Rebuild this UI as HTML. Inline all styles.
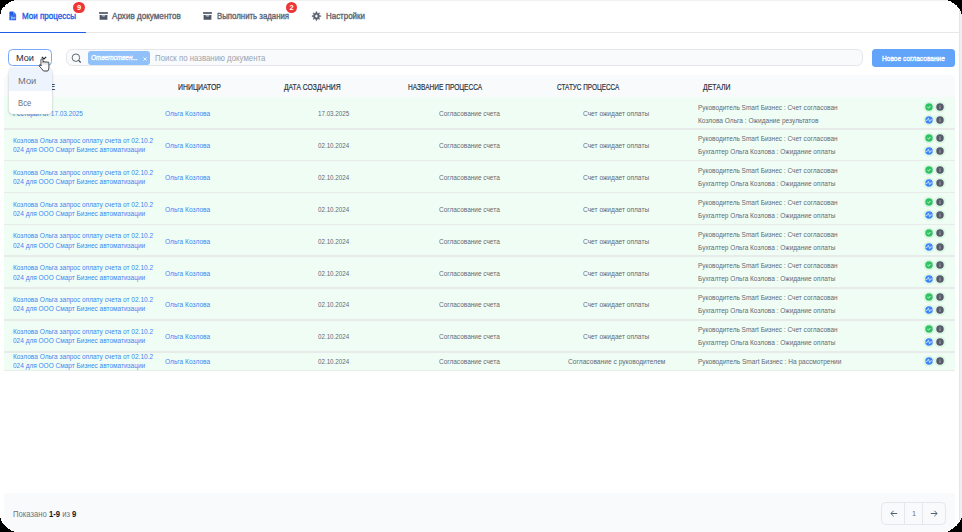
<!DOCTYPE html>
<html><head><meta charset="utf-8">
<style>
html,body{margin:0;padding:0;}
body{width:962px;height:532px;position:relative;overflow:hidden;background:#fff;font-family:"Liberation Sans",sans-serif;}
.t{position:absolute;white-space:nowrap;line-height:1;transform-origin:0 0;}
.badge{position:absolute;width:11.2px;height:11.2px;border-radius:50%;background:#ee3636;color:#fff;font-family:"Liberation Sans",sans-serif;font-weight:700;font-size:7.5px;line-height:11.2px;text-align:center;}
</style></head><body>
<div style="position:absolute;left:0;top:0;width:962px;height:1.3px;background:#eff1f3"></div>
<div style="position:absolute;left:0;top:32px;width:959px;height:1px;background:#e5e7eb"></div>
<div style="position:absolute;left:-2px;top:31.6px;width:88px;height:1.6px;border-radius:1px;background:#1c5ce6"></div>
<svg style="position:absolute;left:0;top:0" width="30" height="30" viewBox="0 0 30 30">
<path d="M10 11.6H13.4L16.1 14.3V19.7A0.6 0.6 0 0 1 15.5 20.3H10A0.6 0.6 0 0 1 9.4 19.7V12.2A0.6 0.6 0 0 1 10 11.6Z" fill="#1d5ae6"/>
<path d="M13.5 11.8V14.2H15.9" fill="none" stroke="#9fb9f5" stroke-width="0.55"/>
<path d="M9.4 16.05H16.1" stroke="#7fa3f3" stroke-width="0.6"/>
<path d="M11.4 16.4V19.9M11.6 17.55H15.6M11.6 18.75H15.6" stroke="#dfe8fd" stroke-width="0.6"/>
</svg>
<div class="t" style="left:21.90px;top:12.29px;font-size:8.4px;font-weight:400;font-style:normal;color:#1d5ae6;transform:scaleX(0.9592);-webkit-text-stroke:0.32px currentColor;">Мои процессы</div>
<div class="badge" style="left:73.4px;top:1.7px">9</div>
<svg style="position:absolute;left:97.8px;top:11px" width="11" height="10" viewBox="0 0 11 10">
<rect x="1" y="1" width="9" height="1.9" rx="0.3" fill="#687080"/>
<rect x="2.8" y="3.9" width="5.4" height="1.6" fill="#a9aeb8"/>
<path d="M1.6 3.9H3.4Q3.5 5.6 5.5 5.6Q7.5 5.6 7.6 3.9H9.4V8.2Q9.4 8.8 8.8 8.8H2.2Q1.6 8.8 1.6 8.2Z" fill="#4f5767"/></svg>
<div class="t" style="left:112.00px;top:12.29px;font-size:8.4px;font-weight:400;font-style:normal;color:#5a6270;transform:scaleX(0.9679);-webkit-text-stroke:0.32px currentColor;">Архив документов</div>
<svg style="position:absolute;left:202.2px;top:11px" width="11" height="10" viewBox="0 0 11 10">
<rect x="1" y="1" width="9" height="1.9" rx="0.3" fill="#687080"/>
<rect x="2.8" y="3.9" width="5.4" height="1.6" fill="#a9aeb8"/>
<path d="M1.6 3.9H3.4Q3.5 5.6 5.5 5.6Q7.5 5.6 7.6 3.9H9.4V8.2Q9.4 8.8 8.8 8.8H2.2Q1.6 8.8 1.6 8.2Z" fill="#4f5767"/></svg>
<div class="t" style="left:216.80px;top:12.29px;font-size:8.4px;font-weight:400;font-style:normal;color:#5a6270;transform:scaleX(0.9336);-webkit-text-stroke:0.32px currentColor;">Выполнить задания</div>
<div class="badge" style="left:285.9px;top:1.6px">2</div>
<svg style="position:absolute;left:0;top:0" width="962" height="40"><path d="M315.87 13.05 L315.99 11.72 L316.81 11.72 L316.93 13.05 L318.18 13.56 L319.20 12.71 L319.79 13.30 L318.94 14.32 L319.45 15.57 L320.78 15.69 L320.78 16.51 L319.45 16.63 L318.94 17.88 L319.79 18.90 L319.20 19.49 L318.18 18.64 L316.93 19.15 L316.81 20.48 L315.99 20.48 L315.87 19.15 L314.62 18.64 L313.60 19.49 L313.01 18.90 L313.86 17.88 L313.35 16.63 L312.02 16.51 L312.02 15.69 L313.35 15.57 L313.86 14.32 L313.01 13.30 L313.60 12.71 L314.62 13.56Z M314.85 16.10 a1.55 1.55 0 1 0 3.10 0 a1.55 1.55 0 1 0 -3.10 0z" fill="#5a6270" fill-rule="evenodd" stroke="#5a6270" stroke-width="0.5" stroke-linejoin="round"/></svg>
<div class="t" style="left:325.80px;top:12.29px;font-size:8.4px;font-weight:400;font-style:normal;color:#5a6270;transform:scaleX(0.9469);-webkit-text-stroke:0.32px currentColor;">Настройки</div>
<div style="position:absolute;left:8.1px;top:49.1px;width:44.4px;height:17.1px;box-sizing:border-box;border:1.3px solid #76a9fa;border-radius:4.5px;background:#fff"></div>
<div class="t" style="left:15.90px;top:53.97px;font-size:8.3px;font-weight:400;font-style:normal;color:#1f2937;transform:scaleX(1.1070);">Мои</div>
<svg style="position:absolute;left:40.5px;top:55.5px" width="6" height="4" viewBox="0 0 6 4"><path d="M0.8 0.8L3 3L5.2 0.8" stroke="#1f2937" stroke-width="1.2" fill="none"/></svg>
<div style="position:absolute;left:65.7px;top:49.4px;width:797.8px;height:16.6px;box-sizing:border-box;border:1px solid #e5e7eb;border-radius:6px;background:#f9fafb"></div>
<svg style="position:absolute;left:71px;top:53px" width="11" height="10" viewBox="0 0 11 10"><circle cx="4.9" cy="4.7" r="3.75" stroke="#3b4350" stroke-width="0.8" fill="none"/><path d="M7.6 7.4L9.7 9.5" stroke="#3b4350" stroke-width="1.1"/></svg>
<div style="position:absolute;left:87.9px;top:51.1px;width:62.4px;height:13.5px;border-radius:3px;background:#90c1fb"></div>
<div class="t" style="left:91.30px;top:54.69px;font-size:7.1px;font-weight:400;font-style:italic;color:#ffffff;transform:scaleX(0.9111);-webkit-text-stroke:0.3px currentColor;">Ответствен...</div>
<svg style="position:absolute;left:142.8px;top:56.6px" width="4" height="4" viewBox="0 0 4 4"><path d="M0.4 0.4L3.6 3.6M3.6 0.4L0.4 3.6" stroke="#fff" stroke-width="0.8"/></svg>
<div class="t" style="left:155.30px;top:53.99px;font-size:8.4px;font-weight:400;font-style:normal;color:#9ca3af;transform:scaleX(0.9366);">Поиск по названию документа</div>
<div style="position:absolute;left:872.3px;top:49.1px;width:82.5px;height:17.8px;border-radius:3.5px;background:#62a4fa"></div>
<div class="t" style="left:882.00px;top:54.72px;font-size:7.3px;font-weight:400;font-style:normal;color:#ffffff;transform:scaleX(0.9038);-webkit-text-stroke:0.32px currentColor;">Новое согласование</div>
<div style="position:absolute;left:4px;top:75px;width:951px;height:22px;background:#f9fafb;border-radius:4px 4px 0 0"></div>
<div class="t" style="left:14.00px;top:82.87px;font-size:8.3px;font-weight:400;font-style:normal;color:#2b3442;transform:scaleX(0.9163);-webkit-text-stroke:0.2px currentColor;">НАЗВАНИЕ</div>
<div class="t" style="left:178.00px;top:82.87px;font-size:8.3px;font-weight:400;font-style:normal;color:#2b3442;transform:scaleX(0.8332);-webkit-text-stroke:0.2px currentColor;">ИНИЦИАТОР</div>
<div class="t" style="left:283.80px;top:82.87px;font-size:8.3px;font-weight:400;font-style:normal;color:#2b3442;transform:scaleX(0.8139);-webkit-text-stroke:0.2px currentColor;">ДАТА СОЗДАНИЯ</div>
<div class="t" style="left:408.40px;top:82.87px;font-size:8.3px;font-weight:400;font-style:normal;color:#2b3442;transform:scaleX(0.7907);-webkit-text-stroke:0.2px currentColor;">НАЗВАНИЕ ПРОЦЕССА</div>
<div class="t" style="left:556.80px;top:82.87px;font-size:8.3px;font-weight:400;font-style:normal;color:#2b3442;transform:scaleX(0.7719);-webkit-text-stroke:0.2px currentColor;">СТАТУС ПРОЦЕССА</div>
<div class="t" style="left:702.70px;top:82.87px;font-size:8.3px;font-weight:400;font-style:normal;color:#2b3442;transform:scaleX(0.8312);-webkit-text-stroke:0.2px currentColor;">ДЕТАЛИ</div>
<div style="position:absolute;left:4px;top:97.00px;width:951px;height:31.00px;background:#f0fdf4"></div>
<div style="position:absolute;left:4px;top:128.00px;width:951px;height:31.86px;background:#f0fdf4"></div>
<div style="position:absolute;left:4px;top:159.86px;width:951px;height:31.86px;background:#f0fdf4"></div>
<div style="position:absolute;left:4px;top:191.71px;width:951px;height:31.86px;background:#f0fdf4"></div>
<div style="position:absolute;left:4px;top:223.57px;width:951px;height:31.86px;background:#f0fdf4"></div>
<div style="position:absolute;left:4px;top:255.43px;width:951px;height:31.86px;background:#f0fdf4"></div>
<div style="position:absolute;left:4px;top:287.28px;width:951px;height:31.86px;background:#f0fdf4"></div>
<div style="position:absolute;left:4px;top:319.14px;width:951px;height:31.86px;background:#f0fdf4"></div>
<div style="position:absolute;left:4px;top:351.00px;width:951px;height:19.50px;background:#f0fdf4"></div>
<div style="position:absolute;left:4px;top:128.00px;width:951px;height:1.6px;background:#e7ecea"></div>
<div style="position:absolute;left:4px;top:159.86px;width:951px;height:1.6px;background:#e7ecea"></div>
<div style="position:absolute;left:4px;top:191.71px;width:951px;height:1.6px;background:#e7ecea"></div>
<div style="position:absolute;left:4px;top:223.57px;width:951px;height:1.6px;background:#e7ecea"></div>
<div style="position:absolute;left:4px;top:255.43px;width:951px;height:1.6px;background:#e7ecea"></div>
<div style="position:absolute;left:4px;top:287.28px;width:951px;height:1.6px;background:#e7ecea"></div>
<div style="position:absolute;left:4px;top:319.14px;width:951px;height:1.6px;background:#e7ecea"></div>
<div style="position:absolute;left:4px;top:351.00px;width:951px;height:1.6px;background:#e7ecea"></div>
<div style="position:absolute;left:4px;top:370px;width:951px;height:1px;background:#e7ede9"></div>
<div class="t" style="left:13.00px;top:109.61px;font-size:7.9px;font-weight:400;font-style:normal;color:#3d87f5;transform:scaleX(0.8129);">Ресторан от 17.03.2025</div>
<div class="t" style="left:164.90px;top:109.61px;font-size:7.9px;font-weight:400;font-style:normal;color:#3d87f5;transform:scaleX(0.8353);">Ольга Козлова</div>
<div class="t" style="left:317.50px;top:109.61px;font-size:7.9px;font-weight:400;font-style:normal;color:#626a77;transform:scaleX(0.7891);">17.03.2025</div>
<div class="t" style="left:439.00px;top:109.61px;font-size:7.9px;font-weight:400;font-style:normal;color:#626a77;transform:scaleX(0.8201);">Согласование счета</div>
<div class="t" style="left:583.30px;top:109.61px;font-size:7.9px;font-weight:400;font-style:normal;color:#626a77;transform:scaleX(0.8335);">Счет ожидает оплаты</div>
<div class="t" style="left:698.40px;top:103.51px;font-size:7.9px;font-weight:400;font-style:normal;color:#626a77;transform:scaleX(0.8224);">Руководитель Smart Бизнес : Счет согласован</div>
<div class="t" style="left:698.40px;top:116.91px;font-size:7.9px;font-weight:400;font-style:normal;color:#626a77;transform:scaleX(0.8328);">Козлова Ольга : Ожидание результатов</div>
<svg style="position:absolute;left:923.2px;top:100.5px" width="12" height="12" viewBox="0 0 12 12"><circle cx="6" cy="6" r="4.9" fill="none" stroke="#d6f6e0" stroke-width="1.2"/><circle cx="6" cy="6" r="3.75" fill="#2ec262"/><path d="M4.4 6.1L5.5 7.1L7.5 5" stroke="#fff" stroke-width="0.8" fill="none"/></svg>
<svg style="position:absolute;left:934.4px;top:100.5px" width="12" height="12" viewBox="0 0 12 12"><circle cx="6" cy="6" r="4.9" fill="none" stroke="#d6f6e0" stroke-width="1.2"/><circle cx="6" cy="6" r="3.75" fill="#555a69"/><path d="M6.1 4.1V4.8M6.1 5.4L5.9 7.9" stroke="#c3c7cf" stroke-width="0.75"/></svg>
<svg style="position:absolute;left:923.2px;top:113.5px" width="12" height="12" viewBox="0 0 12 12"><circle cx="6" cy="6" r="4.9" fill="none" stroke="#d6f6e0" stroke-width="1.2"/><circle cx="6" cy="6" r="3.75" fill="#3d85f6"/><path d="M2.6 6.4L4.2 6.4L5.4 4.2L6.7 7.7L7.6 5.9L9.4 5.9" stroke="#e6efff" stroke-width="0.75" fill="none" stroke-linejoin="round"/></svg>
<svg style="position:absolute;left:934.4px;top:113.5px" width="12" height="12" viewBox="0 0 12 12"><circle cx="6" cy="6" r="4.9" fill="none" stroke="#d6f6e0" stroke-width="1.2"/><circle cx="6" cy="6" r="3.75" fill="#555a69"/><path d="M6.1 4.1V4.8M6.1 5.4L5.9 7.9" stroke="#c3c7cf" stroke-width="0.75"/></svg>
<div class="t" style="left:12.70px;top:136.81px;font-size:7.9px;font-weight:400;font-style:normal;color:#3d87f5;transform:scaleX(0.8277);">Козлова Ольга запрос оплату счета от 02.10.2</div>
<div class="t" style="left:12.70px;top:146.11px;font-size:7.9px;font-weight:400;font-style:normal;color:#3d87f5;transform:scaleX(0.8229);">024 для ООО Смарт Бизнес автоматизации</div>
<div class="t" style="left:164.90px;top:142.11px;font-size:7.9px;font-weight:400;font-style:normal;color:#3d87f5;transform:scaleX(0.8353);">Ольга Козлова</div>
<div class="t" style="left:317.50px;top:142.11px;font-size:7.9px;font-weight:400;font-style:normal;color:#626a77;transform:scaleX(0.7891);">02.10.2024</div>
<div class="t" style="left:439.00px;top:142.11px;font-size:7.9px;font-weight:400;font-style:normal;color:#626a77;transform:scaleX(0.8201);">Согласование счета</div>
<div class="t" style="left:583.30px;top:142.11px;font-size:7.9px;font-weight:400;font-style:normal;color:#626a77;transform:scaleX(0.8335);">Счет ожидает оплаты</div>
<div class="t" style="left:698.40px;top:135.01px;font-size:7.9px;font-weight:400;font-style:normal;color:#626a77;transform:scaleX(0.8224);">Руководитель Smart Бизнес : Счет согласован</div>
<div class="t" style="left:698.40px;top:148.01px;font-size:7.9px;font-weight:400;font-style:normal;color:#626a77;transform:scaleX(0.8247);">Бухгалтер Ольга Козлова : Ожидание оплаты</div>
<svg style="position:absolute;left:923.2px;top:131.9px" width="12" height="12" viewBox="0 0 12 12"><circle cx="6" cy="6" r="4.9" fill="none" stroke="#d6f6e0" stroke-width="1.2"/><circle cx="6" cy="6" r="3.75" fill="#2ec262"/><path d="M4.4 6.1L5.5 7.1L7.5 5" stroke="#fff" stroke-width="0.8" fill="none"/></svg>
<svg style="position:absolute;left:934.4px;top:131.9px" width="12" height="12" viewBox="0 0 12 12"><circle cx="6" cy="6" r="4.9" fill="none" stroke="#d6f6e0" stroke-width="1.2"/><circle cx="6" cy="6" r="3.75" fill="#555a69"/><path d="M6.1 4.1V4.8M6.1 5.4L5.9 7.9" stroke="#c3c7cf" stroke-width="0.75"/></svg>
<svg style="position:absolute;left:923.2px;top:145.1px" width="12" height="12" viewBox="0 0 12 12"><circle cx="6" cy="6" r="4.9" fill="none" stroke="#d6f6e0" stroke-width="1.2"/><circle cx="6" cy="6" r="3.75" fill="#3d85f6"/><path d="M2.6 6.4L4.2 6.4L5.4 4.2L6.7 7.7L7.6 5.9L9.4 5.9" stroke="#e6efff" stroke-width="0.75" fill="none" stroke-linejoin="round"/></svg>
<svg style="position:absolute;left:934.4px;top:145.1px" width="12" height="12" viewBox="0 0 12 12"><circle cx="6" cy="6" r="4.9" fill="none" stroke="#d6f6e0" stroke-width="1.2"/><circle cx="6" cy="6" r="3.75" fill="#555a69"/><path d="M6.1 4.1V4.8M6.1 5.4L5.9 7.9" stroke="#c3c7cf" stroke-width="0.75"/></svg>
<div class="t" style="left:12.70px;top:168.67px;font-size:7.9px;font-weight:400;font-style:normal;color:#3d87f5;transform:scaleX(0.8277);">Козлова Ольга запрос оплату счета от 02.10.2</div>
<div class="t" style="left:12.70px;top:177.97px;font-size:7.9px;font-weight:400;font-style:normal;color:#3d87f5;transform:scaleX(0.8229);">024 для ООО Смарт Бизнес автоматизации</div>
<div class="t" style="left:164.90px;top:173.97px;font-size:7.9px;font-weight:400;font-style:normal;color:#3d87f5;transform:scaleX(0.8353);">Ольга Козлова</div>
<div class="t" style="left:317.50px;top:173.97px;font-size:7.9px;font-weight:400;font-style:normal;color:#626a77;transform:scaleX(0.7891);">02.10.2024</div>
<div class="t" style="left:439.00px;top:173.97px;font-size:7.9px;font-weight:400;font-style:normal;color:#626a77;transform:scaleX(0.8201);">Согласование счета</div>
<div class="t" style="left:583.30px;top:173.97px;font-size:7.9px;font-weight:400;font-style:normal;color:#626a77;transform:scaleX(0.8335);">Счет ожидает оплаты</div>
<div class="t" style="left:698.40px;top:166.87px;font-size:7.9px;font-weight:400;font-style:normal;color:#626a77;transform:scaleX(0.8224);">Руководитель Smart Бизнес : Счет согласован</div>
<div class="t" style="left:698.40px;top:179.87px;font-size:7.9px;font-weight:400;font-style:normal;color:#626a77;transform:scaleX(0.8247);">Бухгалтер Ольга Козлова : Ожидание оплаты</div>
<svg style="position:absolute;left:923.2px;top:163.757px" width="12" height="12" viewBox="0 0 12 12"><circle cx="6" cy="6" r="4.9" fill="none" stroke="#d6f6e0" stroke-width="1.2"/><circle cx="6" cy="6" r="3.75" fill="#2ec262"/><path d="M4.4 6.1L5.5 7.1L7.5 5" stroke="#fff" stroke-width="0.8" fill="none"/></svg>
<svg style="position:absolute;left:934.4px;top:163.757px" width="12" height="12" viewBox="0 0 12 12"><circle cx="6" cy="6" r="4.9" fill="none" stroke="#d6f6e0" stroke-width="1.2"/><circle cx="6" cy="6" r="3.75" fill="#555a69"/><path d="M6.1 4.1V4.8M6.1 5.4L5.9 7.9" stroke="#c3c7cf" stroke-width="0.75"/></svg>
<svg style="position:absolute;left:923.2px;top:176.957px" width="12" height="12" viewBox="0 0 12 12"><circle cx="6" cy="6" r="4.9" fill="none" stroke="#d6f6e0" stroke-width="1.2"/><circle cx="6" cy="6" r="3.75" fill="#3d85f6"/><path d="M2.6 6.4L4.2 6.4L5.4 4.2L6.7 7.7L7.6 5.9L9.4 5.9" stroke="#e6efff" stroke-width="0.75" fill="none" stroke-linejoin="round"/></svg>
<svg style="position:absolute;left:934.4px;top:176.957px" width="12" height="12" viewBox="0 0 12 12"><circle cx="6" cy="6" r="4.9" fill="none" stroke="#d6f6e0" stroke-width="1.2"/><circle cx="6" cy="6" r="3.75" fill="#555a69"/><path d="M6.1 4.1V4.8M6.1 5.4L5.9 7.9" stroke="#c3c7cf" stroke-width="0.75"/></svg>
<div class="t" style="left:12.70px;top:200.53px;font-size:7.9px;font-weight:400;font-style:normal;color:#3d87f5;transform:scaleX(0.8277);">Козлова Ольга запрос оплату счета от 02.10.2</div>
<div class="t" style="left:12.70px;top:209.83px;font-size:7.9px;font-weight:400;font-style:normal;color:#3d87f5;transform:scaleX(0.8229);">024 для ООО Смарт Бизнес автоматизации</div>
<div class="t" style="left:164.90px;top:205.83px;font-size:7.9px;font-weight:400;font-style:normal;color:#3d87f5;transform:scaleX(0.8353);">Ольга Козлова</div>
<div class="t" style="left:317.50px;top:205.83px;font-size:7.9px;font-weight:400;font-style:normal;color:#626a77;transform:scaleX(0.7891);">02.10.2024</div>
<div class="t" style="left:439.00px;top:205.83px;font-size:7.9px;font-weight:400;font-style:normal;color:#626a77;transform:scaleX(0.8201);">Согласование счета</div>
<div class="t" style="left:583.30px;top:205.83px;font-size:7.9px;font-weight:400;font-style:normal;color:#626a77;transform:scaleX(0.8335);">Счет ожидает оплаты</div>
<div class="t" style="left:698.40px;top:198.73px;font-size:7.9px;font-weight:400;font-style:normal;color:#626a77;transform:scaleX(0.8224);">Руководитель Smart Бизнес : Счет согласован</div>
<div class="t" style="left:698.40px;top:211.73px;font-size:7.9px;font-weight:400;font-style:normal;color:#626a77;transform:scaleX(0.8247);">Бухгалтер Ольга Козлова : Ожидание оплаты</div>
<svg style="position:absolute;left:923.2px;top:195.614px" width="12" height="12" viewBox="0 0 12 12"><circle cx="6" cy="6" r="4.9" fill="none" stroke="#d6f6e0" stroke-width="1.2"/><circle cx="6" cy="6" r="3.75" fill="#2ec262"/><path d="M4.4 6.1L5.5 7.1L7.5 5" stroke="#fff" stroke-width="0.8" fill="none"/></svg>
<svg style="position:absolute;left:934.4px;top:195.614px" width="12" height="12" viewBox="0 0 12 12"><circle cx="6" cy="6" r="4.9" fill="none" stroke="#d6f6e0" stroke-width="1.2"/><circle cx="6" cy="6" r="3.75" fill="#555a69"/><path d="M6.1 4.1V4.8M6.1 5.4L5.9 7.9" stroke="#c3c7cf" stroke-width="0.75"/></svg>
<svg style="position:absolute;left:923.2px;top:208.814px" width="12" height="12" viewBox="0 0 12 12"><circle cx="6" cy="6" r="4.9" fill="none" stroke="#d6f6e0" stroke-width="1.2"/><circle cx="6" cy="6" r="3.75" fill="#3d85f6"/><path d="M2.6 6.4L4.2 6.4L5.4 4.2L6.7 7.7L7.6 5.9L9.4 5.9" stroke="#e6efff" stroke-width="0.75" fill="none" stroke-linejoin="round"/></svg>
<svg style="position:absolute;left:934.4px;top:208.814px" width="12" height="12" viewBox="0 0 12 12"><circle cx="6" cy="6" r="4.9" fill="none" stroke="#d6f6e0" stroke-width="1.2"/><circle cx="6" cy="6" r="3.75" fill="#555a69"/><path d="M6.1 4.1V4.8M6.1 5.4L5.9 7.9" stroke="#c3c7cf" stroke-width="0.75"/></svg>
<div class="t" style="left:12.70px;top:232.38px;font-size:7.9px;font-weight:400;font-style:normal;color:#3d87f5;transform:scaleX(0.8277);">Козлова Ольга запрос оплату счета от 02.10.2</div>
<div class="t" style="left:12.70px;top:241.68px;font-size:7.9px;font-weight:400;font-style:normal;color:#3d87f5;transform:scaleX(0.8229);">024 для ООО Смарт Бизнес автоматизации</div>
<div class="t" style="left:164.90px;top:237.68px;font-size:7.9px;font-weight:400;font-style:normal;color:#3d87f5;transform:scaleX(0.8353);">Ольга Козлова</div>
<div class="t" style="left:317.50px;top:237.68px;font-size:7.9px;font-weight:400;font-style:normal;color:#626a77;transform:scaleX(0.7891);">02.10.2024</div>
<div class="t" style="left:439.00px;top:237.68px;font-size:7.9px;font-weight:400;font-style:normal;color:#626a77;transform:scaleX(0.8201);">Согласование счета</div>
<div class="t" style="left:583.30px;top:237.68px;font-size:7.9px;font-weight:400;font-style:normal;color:#626a77;transform:scaleX(0.8335);">Счет ожидает оплаты</div>
<div class="t" style="left:698.40px;top:230.58px;font-size:7.9px;font-weight:400;font-style:normal;color:#626a77;transform:scaleX(0.8224);">Руководитель Smart Бизнес : Счет согласован</div>
<div class="t" style="left:698.40px;top:243.58px;font-size:7.9px;font-weight:400;font-style:normal;color:#626a77;transform:scaleX(0.8247);">Бухгалтер Ольга Козлова : Ожидание оплаты</div>
<svg style="position:absolute;left:923.2px;top:227.471px" width="12" height="12" viewBox="0 0 12 12"><circle cx="6" cy="6" r="4.9" fill="none" stroke="#d6f6e0" stroke-width="1.2"/><circle cx="6" cy="6" r="3.75" fill="#2ec262"/><path d="M4.4 6.1L5.5 7.1L7.5 5" stroke="#fff" stroke-width="0.8" fill="none"/></svg>
<svg style="position:absolute;left:934.4px;top:227.471px" width="12" height="12" viewBox="0 0 12 12"><circle cx="6" cy="6" r="4.9" fill="none" stroke="#d6f6e0" stroke-width="1.2"/><circle cx="6" cy="6" r="3.75" fill="#555a69"/><path d="M6.1 4.1V4.8M6.1 5.4L5.9 7.9" stroke="#c3c7cf" stroke-width="0.75"/></svg>
<svg style="position:absolute;left:923.2px;top:240.671px" width="12" height="12" viewBox="0 0 12 12"><circle cx="6" cy="6" r="4.9" fill="none" stroke="#d6f6e0" stroke-width="1.2"/><circle cx="6" cy="6" r="3.75" fill="#3d85f6"/><path d="M2.6 6.4L4.2 6.4L5.4 4.2L6.7 7.7L7.6 5.9L9.4 5.9" stroke="#e6efff" stroke-width="0.75" fill="none" stroke-linejoin="round"/></svg>
<svg style="position:absolute;left:934.4px;top:240.671px" width="12" height="12" viewBox="0 0 12 12"><circle cx="6" cy="6" r="4.9" fill="none" stroke="#d6f6e0" stroke-width="1.2"/><circle cx="6" cy="6" r="3.75" fill="#555a69"/><path d="M6.1 4.1V4.8M6.1 5.4L5.9 7.9" stroke="#c3c7cf" stroke-width="0.75"/></svg>
<div class="t" style="left:12.70px;top:264.24px;font-size:7.9px;font-weight:400;font-style:normal;color:#3d87f5;transform:scaleX(0.8277);">Козлова Ольга запрос оплату счета от 02.10.2</div>
<div class="t" style="left:12.70px;top:273.54px;font-size:7.9px;font-weight:400;font-style:normal;color:#3d87f5;transform:scaleX(0.8229);">024 для ООО Смарт Бизнес автоматизации</div>
<div class="t" style="left:164.90px;top:269.54px;font-size:7.9px;font-weight:400;font-style:normal;color:#3d87f5;transform:scaleX(0.8353);">Ольга Козлова</div>
<div class="t" style="left:317.50px;top:269.54px;font-size:7.9px;font-weight:400;font-style:normal;color:#626a77;transform:scaleX(0.7891);">02.10.2024</div>
<div class="t" style="left:439.00px;top:269.54px;font-size:7.9px;font-weight:400;font-style:normal;color:#626a77;transform:scaleX(0.8201);">Согласование счета</div>
<div class="t" style="left:583.30px;top:269.54px;font-size:7.9px;font-weight:400;font-style:normal;color:#626a77;transform:scaleX(0.8335);">Счет ожидает оплаты</div>
<div class="t" style="left:698.40px;top:262.44px;font-size:7.9px;font-weight:400;font-style:normal;color:#626a77;transform:scaleX(0.8224);">Руководитель Smart Бизнес : Счет согласован</div>
<div class="t" style="left:698.40px;top:275.44px;font-size:7.9px;font-weight:400;font-style:normal;color:#626a77;transform:scaleX(0.8247);">Бухгалтер Ольга Козлова : Ожидание оплаты</div>
<svg style="position:absolute;left:923.2px;top:259.328px" width="12" height="12" viewBox="0 0 12 12"><circle cx="6" cy="6" r="4.9" fill="none" stroke="#d6f6e0" stroke-width="1.2"/><circle cx="6" cy="6" r="3.75" fill="#2ec262"/><path d="M4.4 6.1L5.5 7.1L7.5 5" stroke="#fff" stroke-width="0.8" fill="none"/></svg>
<svg style="position:absolute;left:934.4px;top:259.328px" width="12" height="12" viewBox="0 0 12 12"><circle cx="6" cy="6" r="4.9" fill="none" stroke="#d6f6e0" stroke-width="1.2"/><circle cx="6" cy="6" r="3.75" fill="#555a69"/><path d="M6.1 4.1V4.8M6.1 5.4L5.9 7.9" stroke="#c3c7cf" stroke-width="0.75"/></svg>
<svg style="position:absolute;left:923.2px;top:272.528px" width="12" height="12" viewBox="0 0 12 12"><circle cx="6" cy="6" r="4.9" fill="none" stroke="#d6f6e0" stroke-width="1.2"/><circle cx="6" cy="6" r="3.75" fill="#3d85f6"/><path d="M2.6 6.4L4.2 6.4L5.4 4.2L6.7 7.7L7.6 5.9L9.4 5.9" stroke="#e6efff" stroke-width="0.75" fill="none" stroke-linejoin="round"/></svg>
<svg style="position:absolute;left:934.4px;top:272.528px" width="12" height="12" viewBox="0 0 12 12"><circle cx="6" cy="6" r="4.9" fill="none" stroke="#d6f6e0" stroke-width="1.2"/><circle cx="6" cy="6" r="3.75" fill="#555a69"/><path d="M6.1 4.1V4.8M6.1 5.4L5.9 7.9" stroke="#c3c7cf" stroke-width="0.75"/></svg>
<div class="t" style="left:12.70px;top:296.10px;font-size:7.9px;font-weight:400;font-style:normal;color:#3d87f5;transform:scaleX(0.8277);">Козлова Ольга запрос оплату счета от 02.10.2</div>
<div class="t" style="left:12.70px;top:305.40px;font-size:7.9px;font-weight:400;font-style:normal;color:#3d87f5;transform:scaleX(0.8229);">024 для ООО Смарт Бизнес автоматизации</div>
<div class="t" style="left:164.90px;top:301.40px;font-size:7.9px;font-weight:400;font-style:normal;color:#3d87f5;transform:scaleX(0.8353);">Ольга Козлова</div>
<div class="t" style="left:317.50px;top:301.40px;font-size:7.9px;font-weight:400;font-style:normal;color:#626a77;transform:scaleX(0.7891);">02.10.2024</div>
<div class="t" style="left:439.00px;top:301.40px;font-size:7.9px;font-weight:400;font-style:normal;color:#626a77;transform:scaleX(0.8201);">Согласование счета</div>
<div class="t" style="left:583.30px;top:301.40px;font-size:7.9px;font-weight:400;font-style:normal;color:#626a77;transform:scaleX(0.8335);">Счет ожидает оплаты</div>
<div class="t" style="left:698.40px;top:294.30px;font-size:7.9px;font-weight:400;font-style:normal;color:#626a77;transform:scaleX(0.8224);">Руководитель Smart Бизнес : Счет согласован</div>
<div class="t" style="left:698.40px;top:307.30px;font-size:7.9px;font-weight:400;font-style:normal;color:#626a77;transform:scaleX(0.8247);">Бухгалтер Ольга Козлова : Ожидание оплаты</div>
<svg style="position:absolute;left:923.2px;top:291.18499999999995px" width="12" height="12" viewBox="0 0 12 12"><circle cx="6" cy="6" r="4.9" fill="none" stroke="#d6f6e0" stroke-width="1.2"/><circle cx="6" cy="6" r="3.75" fill="#2ec262"/><path d="M4.4 6.1L5.5 7.1L7.5 5" stroke="#fff" stroke-width="0.8" fill="none"/></svg>
<svg style="position:absolute;left:934.4px;top:291.18499999999995px" width="12" height="12" viewBox="0 0 12 12"><circle cx="6" cy="6" r="4.9" fill="none" stroke="#d6f6e0" stroke-width="1.2"/><circle cx="6" cy="6" r="3.75" fill="#555a69"/><path d="M6.1 4.1V4.8M6.1 5.4L5.9 7.9" stroke="#c3c7cf" stroke-width="0.75"/></svg>
<svg style="position:absolute;left:923.2px;top:304.385px" width="12" height="12" viewBox="0 0 12 12"><circle cx="6" cy="6" r="4.9" fill="none" stroke="#d6f6e0" stroke-width="1.2"/><circle cx="6" cy="6" r="3.75" fill="#3d85f6"/><path d="M2.6 6.4L4.2 6.4L5.4 4.2L6.7 7.7L7.6 5.9L9.4 5.9" stroke="#e6efff" stroke-width="0.75" fill="none" stroke-linejoin="round"/></svg>
<svg style="position:absolute;left:934.4px;top:304.385px" width="12" height="12" viewBox="0 0 12 12"><circle cx="6" cy="6" r="4.9" fill="none" stroke="#d6f6e0" stroke-width="1.2"/><circle cx="6" cy="6" r="3.75" fill="#555a69"/><path d="M6.1 4.1V4.8M6.1 5.4L5.9 7.9" stroke="#c3c7cf" stroke-width="0.75"/></svg>
<div class="t" style="left:12.70px;top:327.95px;font-size:7.9px;font-weight:400;font-style:normal;color:#3d87f5;transform:scaleX(0.8277);">Козлова Ольга запрос оплату счета от 02.10.2</div>
<div class="t" style="left:12.70px;top:337.25px;font-size:7.9px;font-weight:400;font-style:normal;color:#3d87f5;transform:scaleX(0.8229);">024 для ООО Смарт Бизнес автоматизации</div>
<div class="t" style="left:164.90px;top:333.25px;font-size:7.9px;font-weight:400;font-style:normal;color:#3d87f5;transform:scaleX(0.8353);">Ольга Козлова</div>
<div class="t" style="left:317.50px;top:333.25px;font-size:7.9px;font-weight:400;font-style:normal;color:#626a77;transform:scaleX(0.7891);">02.10.2024</div>
<div class="t" style="left:439.00px;top:333.25px;font-size:7.9px;font-weight:400;font-style:normal;color:#626a77;transform:scaleX(0.8201);">Согласование счета</div>
<div class="t" style="left:583.30px;top:333.25px;font-size:7.9px;font-weight:400;font-style:normal;color:#626a77;transform:scaleX(0.8335);">Счет ожидает оплаты</div>
<div class="t" style="left:698.40px;top:326.15px;font-size:7.9px;font-weight:400;font-style:normal;color:#626a77;transform:scaleX(0.8224);">Руководитель Smart Бизнес : Счет согласован</div>
<div class="t" style="left:698.40px;top:339.15px;font-size:7.9px;font-weight:400;font-style:normal;color:#626a77;transform:scaleX(0.8247);">Бухгалтер Ольга Козлова : Ожидание оплаты</div>
<svg style="position:absolute;left:923.2px;top:323.042px" width="12" height="12" viewBox="0 0 12 12"><circle cx="6" cy="6" r="4.9" fill="none" stroke="#d6f6e0" stroke-width="1.2"/><circle cx="6" cy="6" r="3.75" fill="#2ec262"/><path d="M4.4 6.1L5.5 7.1L7.5 5" stroke="#fff" stroke-width="0.8" fill="none"/></svg>
<svg style="position:absolute;left:934.4px;top:323.042px" width="12" height="12" viewBox="0 0 12 12"><circle cx="6" cy="6" r="4.9" fill="none" stroke="#d6f6e0" stroke-width="1.2"/><circle cx="6" cy="6" r="3.75" fill="#555a69"/><path d="M6.1 4.1V4.8M6.1 5.4L5.9 7.9" stroke="#c3c7cf" stroke-width="0.75"/></svg>
<svg style="position:absolute;left:923.2px;top:336.242px" width="12" height="12" viewBox="0 0 12 12"><circle cx="6" cy="6" r="4.9" fill="none" stroke="#d6f6e0" stroke-width="1.2"/><circle cx="6" cy="6" r="3.75" fill="#3d85f6"/><path d="M2.6 6.4L4.2 6.4L5.4 4.2L6.7 7.7L7.6 5.9L9.4 5.9" stroke="#e6efff" stroke-width="0.75" fill="none" stroke-linejoin="round"/></svg>
<svg style="position:absolute;left:934.4px;top:336.242px" width="12" height="12" viewBox="0 0 12 12"><circle cx="6" cy="6" r="4.9" fill="none" stroke="#d6f6e0" stroke-width="1.2"/><circle cx="6" cy="6" r="3.75" fill="#555a69"/><path d="M6.1 4.1V4.8M6.1 5.4L5.9 7.9" stroke="#c3c7cf" stroke-width="0.75"/></svg>
<div class="t" style="left:12.70px;top:353.01px;font-size:7.9px;font-weight:400;font-style:normal;color:#3d87f5;transform:scaleX(0.8277);">Козлова Ольга запрос оплату счета от 02.10.2</div>
<div class="t" style="left:12.70px;top:361.61px;font-size:7.9px;font-weight:400;font-style:normal;color:#3d87f5;transform:scaleX(0.8229);">024 для ООО Смарт Бизнес автоматизации</div>
<div class="t" style="left:164.90px;top:357.81px;font-size:7.9px;font-weight:400;font-style:normal;color:#3d87f5;transform:scaleX(0.8353);">Ольга Козлова</div>
<div class="t" style="left:317.50px;top:357.81px;font-size:7.9px;font-weight:400;font-style:normal;color:#626a77;transform:scaleX(0.7891);">02.10.2024</div>
<div class="t" style="left:439.00px;top:357.81px;font-size:7.9px;font-weight:400;font-style:normal;color:#626a77;transform:scaleX(0.8201);">Согласование счета</div>
<div class="t" style="left:568.20px;top:357.81px;font-size:7.9px;font-weight:400;font-style:normal;color:#626a77;transform:scaleX(0.8413);">Согласование с руководителем</div>
<div class="t" style="left:698.40px;top:357.81px;font-size:7.9px;font-weight:400;font-style:normal;color:#626a77;transform:scaleX(0.8296);">Руководитель Smart Бизнес : На рассмотрении</div>
<svg style="position:absolute;left:923.1px;top:355.0px" width="12" height="12" viewBox="0 0 12 12"><circle cx="6" cy="6" r="4.9" fill="none" stroke="#d6f6e0" stroke-width="1.2"/><circle cx="6" cy="6" r="3.75" fill="#3d85f6"/><path d="M2.6 6.4L4.2 6.4L5.4 4.2L6.7 7.7L7.6 5.9L9.4 5.9" stroke="#e6efff" stroke-width="0.75" fill="none" stroke-linejoin="round"/></svg>
<svg style="position:absolute;left:934.4px;top:355.2px" width="12" height="12" viewBox="0 0 12 12"><circle cx="6" cy="6" r="4.9" fill="none" stroke="#d6f6e0" stroke-width="1.2"/><circle cx="6" cy="6" r="3.75" fill="#555a69"/><path d="M6.1 4.1V4.8M6.1 5.4L5.9 7.9" stroke="#c3c7cf" stroke-width="0.75"/></svg>
<div style="position:absolute;left:8.7px;top:68.2px;width:43.4px;height:45.9px;background:#fff;border-radius:4px;box-shadow:0 1px 3px rgba(0,0,0,0.18),0 0 1px rgba(0,0,0,0.2);overflow:hidden"><div style="position:absolute;left:0;top:0;width:100%;height:22.9px;background:#eef4fe"></div></div>
<div class="t" style="left:18.00px;top:75.89px;font-size:9.7px;font-weight:400;font-style:normal;color:#6b7280;transform:scaleX(0.9630);">Мои</div>
<div class="t" style="left:18.00px;top:97.99px;font-size:9.7px;font-weight:400;font-style:normal;color:#6b7280;transform:scaleX(0.7957);">Все</div>
<svg style="position:absolute;left:0;top:0" width="60" height="80" viewBox="0 0 60 80">
<path d="M41 66V59.8Q41 58.8 42 58.8Q43 58.8 43 59.8V62.3Q43.1 61.6 44 61.6Q44.9 61.6 45 62.4Q45.1 61.7 46 61.7Q46.9 61.7 47 62.5Q47.1 62 47.9 62Q48.9 62 48.9 63V67.5Q48.9 69.5 47.8 71H43.6Q42.8 70.2 41.5 68.5L39.2 66Q38.8 65.2 39.6 64.9Q40.3 64.7 41 65.4Z" fill="#fff" stroke="#1e1e1e" stroke-width="0.85" stroke-linejoin="round"/>
<path d="M43 62.4V64.6M45 62.5V64.6M47 62.6V64.6" stroke="#8a8a8a" stroke-width="0.45"/>
<path d="M41.7 59.5V65" stroke="#c8c8c8" stroke-width="0.6"/></svg>
<div style="position:absolute;left:4px;top:493px;width:951px;height:39px;background:#f9fafb"></div>
<div class="t" style="left:13px;top:510px;font-size:8.3px;color:#6b7280;white-space:nowrap;transform:scaleX(0.925)">Показано <b style="color:#111827">1-9</b> из <b style="color:#111827">9</b></div>
<div style="position:absolute;left:881.3px;top:502px;width:64.4px;height:23px;box-sizing:border-box;border:1px solid #e5e7eb;border-radius:4.5px;background:#f9fafb"></div>
<div style="position:absolute;left:904px;top:502px;width:1px;height:23px;background:#e5e7eb"></div>
<div style="position:absolute;left:922px;top:502px;width:1px;height:23px;background:#e5e7eb"></div>
<svg style="position:absolute;left:889.5px;top:510.2px" width="8" height="7" viewBox="0 0 8 7"><path d="M7.2 3.5H1M3.6 0.8L0.9 3.5L3.6 6.2" stroke="#546274" stroke-width="1" fill="none"/></svg>
<div class="t" style="left:911.50px;top:510.44px;font-size:7.75px;font-weight:400;font-style:normal;color:#6b7280;transform:scaleX(0.9280);">1</div>
<svg style="position:absolute;left:929.6px;top:510.2px" width="8" height="7" viewBox="0 0 8 7"><path d="M0.8 3.5H7M4.4 0.8L7.1 3.5L4.4 6.2" stroke="#546274" stroke-width="1" fill="none"/></svg>
<div style="position:absolute;left:959px;top:10px;width:3px;height:510px;background:#edf0f3;border-left:1px solid #e3e6ea;box-sizing:border-box"></div>
<svg style="position:absolute;left:0;top:0" width="962" height="532" viewBox="0 0 962 532" shape-rendering="crispEdges" fill="#000"><rect x="0" y="0" width="14" height="1"/><rect x="0" y="1" width="11" height="1"/><rect x="0" y="2" width="9" height="1"/><rect x="0" y="3" width="8" height="1"/><rect x="0" y="4" width="6" height="1"/><rect x="0" y="5" width="5" height="1"/><rect x="0" y="6" width="5" height="1"/><rect x="0" y="7" width="3" height="1"/><rect x="0" y="8" width="2" height="1"/><rect x="0" y="9" width="2" height="1"/><rect x="0" y="10" width="1" height="1"/><rect x="0" y="11" width="1" height="1"/><rect x="0" y="12" width="1" height="1"/><rect x="0" y="13" width="1" height="1"/><rect x="948" y="0" width="14" height="1"/><rect x="951" y="1" width="11" height="1"/><rect x="952" y="2" width="10" height="1"/><rect x="954" y="3" width="8" height="1"/><rect x="955" y="4" width="7" height="1"/><rect x="957" y="5" width="5" height="1"/><rect x="957" y="6" width="5" height="1"/><rect x="958" y="7" width="4" height="1"/><rect x="959" y="8" width="3" height="1"/><rect x="960" y="9" width="2" height="1"/><rect x="960" y="10" width="2" height="1"/><rect x="961" y="11" width="1" height="1"/><rect x="961" y="12" width="1" height="1"/><rect x="961" y="13" width="1" height="1"/><rect x="948" y="531" width="14" height="1"/><rect x="950" y="530" width="12" height="1"/><rect x="951" y="529" width="11" height="1"/><rect x="953" y="528" width="9" height="1"/><rect x="954" y="527" width="8" height="1"/><rect x="955" y="526" width="7" height="1"/><rect x="957" y="525" width="5" height="1"/><rect x="957" y="524" width="5" height="1"/><rect x="958" y="523" width="4" height="1"/><rect x="959" y="522" width="3" height="1"/><rect x="960" y="521" width="2" height="1"/><rect x="960" y="520" width="2" height="1"/><rect x="961" y="519" width="1" height="1"/><rect x="961" y="518" width="1" height="1"/><rect x="0" y="531" width="14" height="1"/><rect x="0" y="530" width="11" height="1"/><rect x="0" y="529" width="10" height="1"/><rect x="0" y="528" width="8" height="1"/><rect x="0" y="527" width="7" height="1"/><rect x="0" y="526" width="6" height="1"/><rect x="0" y="525" width="5" height="1"/><rect x="0" y="524" width="4" height="1"/><rect x="0" y="523" width="3" height="1"/><rect x="0" y="522" width="2" height="1"/><rect x="0" y="521" width="2" height="1"/><rect x="0" y="520" width="1" height="1"/><rect x="0" y="519" width="1" height="1"/><rect x="0" y="518" width="1" height="1"/></svg>
</body></html>
